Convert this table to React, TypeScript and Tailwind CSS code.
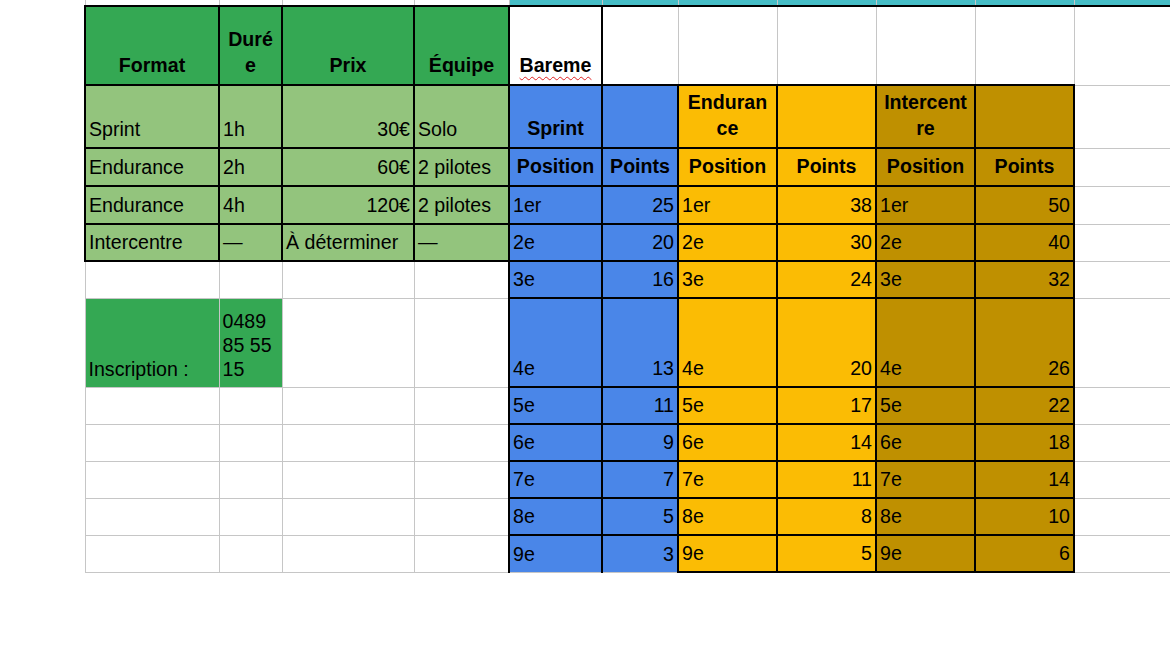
import type { ReactNode } from "react";

type Cell = {
  t?: ReactNode;
  bg?: string;
  a?: "r" | "c";
  b?: boolean;
  k?: boolean;
  gb?: boolean;
};

const DG = "bg-[#34a853]";
const LG = "bg-[#93c47d]";
const BL = "bg-[#4a86e8]";
const YE = "bg-[#fbbc04]";
const GO = "bg-[#bf9000]";

const cols = [
  "w-[134px]",
  "w-[63px]",
  "w-[132px]",
  "w-[95px]",
  "w-[93px]",
  "w-[76px]",
  "w-[99px]",
  "w-[99px]",
  "w-[99px]",
  "w-[99px]",
  "w-[100px]",
];

const heights = [
  "h-[79px]",
  "h-[63px]",
  "h-[38px]",
  "h-[38px]",
  "h-[37px]",
  "h-[37px]",
  "h-[89px]",
  "h-[37px]",
  "h-[37px]",
  "h-[37px]",
  "h-[37px]",
  "h-[37px]",
];

const positions = ["1er", "2e", "3e", "4e", "5e", "6e", "7e", "8e", "9e"];
const sprint = [25, 20, 16, 13, 11, 9, 7, 5, 3];
const endurance = [38, 30, 24, 20, 17, 14, 11, 8, 5];
const intercentre = [50, 40, 32, 26, 22, 18, 14, 10, 6];

const head = (t: ReactNode, bg: string): Cell => ({ t, bg, a: "c", b: true, k: true });
const green = (t?: ReactNode, a?: "r"): Cell => ({ t, bg: LG, k: true, a });

const left: Cell[][] = [
  [head("Format", DG), head(<>Duré<br />e</>, DG), head("Prix", DG), head("Équipe", DG)],
  [green("Sprint"), green("1h"), green("30€", "r"), green("Solo")],
  [green("Endurance"), green("2h"), green("60€", "r"), green("2 pilotes")],
  [green("Endurance"), green("4h"), green("120€", "r"), green("2 pilotes")],
  [green("Intercentre"), green("—"), green("À déterminer"), green("—")],
  [{}, {}, {}, {}],
  [{ t: "Inscription :", bg: DG }, { t: <>0489<br />85 55<br />15</>, bg: DG }, {}, {}],
  [{}, {}, {}, {}],
  [{}, {}, {}, {}],
  [{}, {}, {}, {}],
  [{}, {}, {}, {}],
  [{}, {}, {}, {}],
];

const bareme: Cell = {
  t: <span className="underline decoration-wavy decoration-[#e02020] decoration-1 underline-offset-4">Bareme</span>,
  a: "c",
  b: true,
  k: true,
};

const right: Cell[][] = [
  [bareme, {}, {}, {}, {}, {}, {}],
  [
    head("Sprint", BL),
    { bg: BL, k: true },
    head(<>Enduran<br />ce</>, YE),
    { bg: YE, k: true },
    head(<>Intercent<br />re</>, GO),
    { bg: GO, k: true },
    {},
  ],
  [
    head("Position", BL),
    head("Points", BL),
    head("Position", YE),
    head("Points", YE),
    head("Position", GO),
    head("Points", GO),
    {},
  ],
  ...positions.map((p, i) => {
    const last = i === positions.length - 1;
    return [
      { t: p, bg: BL, k: true, gb: last },
      { t: sprint[i], bg: BL, k: true, a: "r", gb: last },
      { t: p, bg: YE, k: true },
      { t: endurance[i], bg: YE, k: true, a: "r" },
      { t: p, bg: GO, k: true },
      { t: intercentre[i], bg: GO, k: true, a: "r" },
      {},
    ] as Cell[];
  }),
];

function Td({ c }: { c: Cell }) {
  const border = c.k
    ? c.gb
      ? "border-2 border-black border-b border-b-[#c6c6c6]"
      : "border-2 border-black"
    : "border border-[#c6c6c6]";
  const align = c.a === "r" ? "text-right" : c.a === "c" ? "text-center" : "text-left";
  return (
    <td
      className={`${border} ${c.bg ?? "bg-white"} ${align} ${c.b ? "font-bold leading-[26px]" : "font-normal leading-[24px]"} align-bottom px-[3px] pt-0 pb-[6px] whitespace-nowrap overflow-hidden`}
    >
      {c.t}
    </td>
  );
}

export default function App() {
  return (
    <div className="w-[1170px] h-[650px] overflow-hidden bg-white pl-[84px] font-['Liberation_Sans',Arial,sans-serif] text-[19.6px] text-black">
      <table className="table-fixed border-collapse w-[1089px]">
        <colgroup>
          {cols.map((w, i) => (
            <col key={i} className={w} />
          ))}
        </colgroup>
        <tbody>
          <tr className="h-[6px]">
            {cols.map((_, i) => (
              <td
                key={i}
                className={`border border-[#c6c6c6] border-t-0 border-b-2 border-b-black p-0 ${i >= 4 ? "bg-[#46bdc6]" : "bg-white"}`}
              />
            ))}
          </tr>
          {heights.map((h, r) => (
            <tr key={r} className={h}>
              {[...left[r], ...right[r]].map((c, i) => (
                <Td key={i} c={c} />
              ))}
            </tr>
          ))}
        </tbody>
      </table>
    </div>
  );
}
